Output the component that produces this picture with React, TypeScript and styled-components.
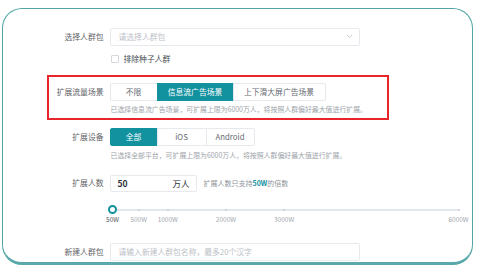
import React from "react";
import styled, { createGlobalStyle } from "styled-components";

const GlobalStyle = createGlobalStyle`
  html, body { margin: 0; padding: 0; background: #ffffff; }
  body { font-family: "Noto Sans CJK SC", "Noto Sans", sans-serif; }
  * { box-sizing: border-box; }
`;

const TEAL = "#12929f";

const Page = styled.div`
  width: 479px;
  height: 267px;
  padding: 8px 0 0 2px;
  background: #fff;
`;

const Card = styled.div`
  width: 471px;
  height: 257px;
  border: 1.5px solid #52a5a6;
  border-bottom: 3px solid #5aa9aa;
  border-radius: 20px;
  overflow: hidden;
  background: #fff;
  padding: 18.5px 0 0 45.5px;
  display: flex;
  flex-direction: column;
`;

const Row = styled.div<{ $mt?: number }>`
  display: flex;
  align-items: center;
  margin-top: ${(p) => p.$mt ?? 0}px;
`;

const Label = styled.div`
  width: 55px;
  margin-right: 6px;
  text-align: right;
  font-size: 7.8px;
  color: #5f646a;
  white-space: nowrap;
  line-height: 10px;
`;

const Spacer = styled.div`
  width: 55px;
  margin-right: 6px;
  flex: none;
`;

const SelectBox = styled.div<{ $w: number }>`
  width: ${(p) => p.$w}px;
  height: 18px;
  border: 1px solid #e6e9ed;
  border-radius: 2px;
  display: flex;
  align-items: center;
  justify-content: space-between;
  padding: 0 6px 0 8px;
  font-size: 7.8px;
  color: #bcc1c7;
`;

const Checkbox = styled.span`
  width: 8px;
  height: 8px;
  border: 1px solid #d5d9de;
  border-radius: 1px;
  margin: 0 5px 0 1px;
  background: #fff;
`;

const CheckText = styled.span`
  font-size: 7.8px;
  color: #44484e;
  line-height: 10px;
`;

const Highlight = styled.div`
  width: 342px;
  margin: 11px 0 0 -2px;
  border: 2px solid #e8252b;
  padding: 6px 0 4px 0;
  display: flex;
  flex-direction: column;
`;

const Segments = styled.div`
  display: flex;
  height: 18px;
`;

const Seg = styled.div<{ $w: number; $active?: boolean }>`
  width: ${(p) => p.$w}px;
  height: 18px;
  display: flex;
  align-items: center;
  justify-content: center;
  font-size: 7.8px;
  border: 1px solid ${(p) => (p.$active ? TEAL : "#e6e9ed")};
  margin-left: -1px;
  background: ${(p) => (p.$active ? TEAL : "#fff")};
  color: ${(p) => (p.$active ? "#fff" : "#666b71")};
  &:first-child {
    margin-left: 0;
    border-radius: 2px 0 0 2px;
  }
  &:last-child {
    border-radius: 0 2px 2px 0;
  }
`;

const Help = styled.div<{ $mt: number }>`
  margin-top: ${(p) => p.$mt}px;
  font-size: 6.9px;
  line-height: 10px;
  color: #9ea4aa;
  white-space: nowrap;
  padding-left: 1px;
`;

const NumInput = styled.div`
  width: 87px;
  height: 17px;
  border: 1px solid #e6e9ed;
  border-radius: 2px;
  display: flex;
  align-items: center;
  justify-content: space-between;
  padding: 0 6px 0 7px;
  font-size: 8.5px;
  color: #2c3036;
`;

const Value = styled.span`
  font-weight: 600;
`;

const Hint = styled.span`
  margin-left: 7px;
  font-size: 7px;
  color: #8d9399;
`;

const Em = styled.span`
  color: ${TEAL};
  font-weight: 600;
`;

const SliderArea = styled.div`
  position: relative;
  width: 346px;
  height: 28px;
  margin-left: 3px;
`;

const Track = styled.div`
  position: absolute;
  left: 0;
  right: 0;
  top: 11px;
  height: 2px;
  background: #e2e7ee;
  border-radius: 1px;
`;

const Dot = styled.span`
  position: absolute;
  top: 11px;
  width: 2px;
  height: 2px;
  margin-left: -1px;
  border-radius: 50%;
  background: #c6ced8;
`;

const Handle = styled.span`
  position: absolute;
  top: 7.5px;
  left: -4.5px;
  width: 9px;
  height: 9px;
  border-radius: 50%;
  border: 2px solid ${TEAL};
  background: #fff;
`;

const Mark = styled.span<{ $active?: boolean }>`
  position: absolute;
  top: 17px;
  transform: translateX(-50%);
  font-size: 6.5px;
  line-height: 8px;
  color: ${(p) => (p.$active ? "#50555b" : "#a3a9af")};
  white-space: nowrap;
`;

const marks = [50, 500, 1000, 2000, 3000, 6000];

export default function App() {
  const pct = (v: number) => ((v - 50) / (6000 - 50)) * 100;
  return (
    <>
      <GlobalStyle />
      <Page>
        <Card>
          <Row>
            <Label>选择人群包</Label>
            <SelectBox $w={250}>
              <span>请选择人群包</span>
              <svg width="7" height="5" viewBox="0 0 7 5">
                <path d="M1 1l2.5 2.5L6 1" fill="none" stroke="#c3c8ce" strokeWidth="0.9" />
              </svg>
            </SelectBox>
          </Row>
          <Row $mt={8}>
            <Spacer />
            <Checkbox />
            <CheckText>排除种子人群</CheckText>
          </Row>
          <Highlight>
            <Row>
              <Label>扩展流量场景</Label>
              <Segments>
                <Seg $w={48}>不限</Seg>
                <Seg $w={77} $active>信息流广告场景</Seg>
                <Seg $w={93}>上下滑大屏广告场景</Seg>
              </Segments>
            </Row>
            <Row>
              <Spacer />
              <Help $mt={3}>已选择信息流广告场景，可扩展上限为6000万人，将按照人群偏好最大值进行扩展。</Help>
            </Row>
          </Highlight>
          <Row $mt={8}>
            <Label>扩展设备</Label>
            <Segments>
              <Seg $w={48} $active>全部</Seg>
              <Seg $w={50}>iOS</Seg>
              <Seg $w={49}>Android</Seg>
            </Segments>
          </Row>
          <Row>
            <Spacer />
            <Help $mt={4}>已选择全部平台，可扩展上限为6000万人，将按照人群偏好最大值进行扩展。</Help>
          </Row>
          <Row $mt={15}>
            <Label>扩展人数</Label>
            <NumInput>
              <Value>50</Value>
              <span>万人</span>
            </NumInput>
            <Hint>
              扩展人数只支持<Em>50W</Em>的倍数
            </Hint>
          </Row>
          <Row $mt={6}>
            <Spacer />
            <SliderArea>
              <Track />
              {marks.slice(1).map((m) => (
                <Dot key={m} style={{ left: `${pct(m)}%` }} />
              ))}
              <Handle />
              {marks.map((m, i) => (
                <Mark key={m} $active={i === 0} style={{ left: `${pct(m)}%` }}>
                  {m}W
                </Mark>
              ))}
            </SliderArea>
          </Row>
          <Row $mt={17}>
            <Label>新建人群包</Label>
            <SelectBox $w={250}>
              <span>请输入新建人群包名称，最多20个汉字</span>
            </SelectBox>
          </Row>
        </Card>
      </Page>
    </>
  );
}
